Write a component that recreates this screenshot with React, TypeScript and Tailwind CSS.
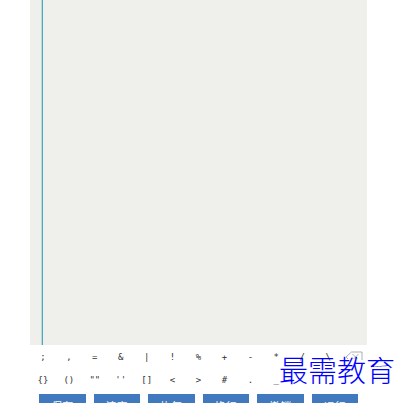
const symbolRows = [
  [';', ',', '=', '&', '|', '!', '%', '+', '-', '*', '/', '\\'],
  ['{}', '()', '""', "''", '[]', '<', '>', '#', '.', '_'],
]

const actions = ['保存', '清空', '恢复', '换行', '撤销', '运行']

const BackspaceIcon = () => (
  <svg viewBox="0 0 18 12" className="h-3 w-[18px]" fill="none" stroke="#999999" strokeWidth="0.8">
    <path d="M1 6 6.5 1H17v8M1 6l2 2" />
    <path d="m7.5 3 5 5M13.5 3l-5 5" />
  </svg>
)

export default function App() {
  return (
    <div className="h-screen overflow-hidden bg-white font-['Noto_Sans_CJK_SC',sans-serif]">
      <main className="relative mr-[34px] ml-[30px]">
        <div className="h-[345px] bg-[#eff0eb] pl-[11px]">
          <div className="h-full border-l border-[#b9d9dd]">
            <textarea
              aria-label="Code"
              className="block h-full w-full resize-none border-l border-[#4fa6bf] bg-transparent px-2 text-sm outline-none"
            />
          </div>
        </div>
        <div className="pb-0.5">
          {symbolRows.map((row, idx) => (
            <div key={idx} className="grid h-[23px] grid-cols-13 items-center">
              {row.map((symbol) => (
                <button
                  key={symbol}
                  className="text-center font-['DejaVu_Sans_Mono',monospace] text-[9px] leading-5 text-[#333333]"
                >
                  {symbol}
                </button>
              ))}
              {idx === 0 && (
                <button aria-label="Backspace" className="flex justify-center">
                  <BackspaceIcon />
                </button>
              )}
            </div>
          ))}
        </div>
        <div className="mt-px grid grid-cols-6 gap-2 px-[9px]">
          {actions.map((label) => (
            <button key={label} className="h-6 bg-[#4079bd] text-[11px] text-white">
              {label}
            </button>
          ))}
        </div>
        <div className="pointer-events-none absolute top-[353px] -right-7 text-[29px] leading-8 font-light whitespace-nowrap text-[#0000ff]">
          最需教育
        </div>
      </main>
    </div>
  )
}
